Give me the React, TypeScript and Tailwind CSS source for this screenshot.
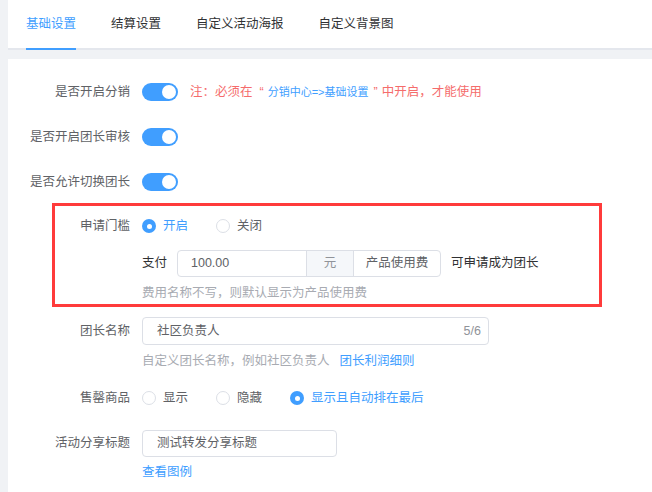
import React, { useState } from 'react';

const font = { fontFamily: '"Liberation Sans", "Noto Sans CJK SC", sans-serif' };

const tabs = ['基础设置', '结算设置', '自定义活动海报', '自定义背景图'];

const Switch = ({ on }: { on: boolean }) => (
  <div className={`flex h-[18px] w-9 items-center rounded-full px-[2px] ${on ? 'justify-end bg-[#409eff]' : 'justify-start bg-[#dcdfe6]'}`}>
    <div className="h-[14px] w-[14px] rounded-full bg-white" />
  </div>
);

const Radio = ({ checked, label }: { checked: boolean; label: string }) => (
  <div className="flex items-center gap-[7px]">
    {checked ? (
      <div className="flex h-[14px] w-[14px] items-center justify-center rounded-full bg-[#409eff]">
        <div className="h-[5px] w-[5px] rounded-full bg-white" />
      </div>
    ) : (
      <div className="h-[14px] w-[14px] rounded-full border border-[#dcdfe6] bg-white" />
    )}
    <span className={checked ? 'text-[#409eff]' : 'text-[#606266]'}>{label}</span>
  </div>
);

const Label = ({ children }: { children: React.ReactNode }) => (
  <div className="w-[134px] shrink-0 pr-3 text-right text-[#606266]">{children}</div>
);

export default function App() {
  const [active] = useState(0);

  return (
    <div className="min-h-[492px] bg-[#f0f2f5] pl-2 text-[12.5px]" style={font}>
      {/* Tabs */}
      <div className="flex h-[50px] border-b-2 border-[#e4e7ed] bg-white pl-[18px]">
        {tabs.map((t, i) => (
          <div
            key={t}
            className={`-mb-[2px] mr-[35px] flex items-center border-b-2 ${i === active ? 'border-[#409eff] text-[#409eff]' : 'border-transparent text-[#303133]'}`}
          >
            {t}
          </div>
        ))}
      </div>

      {/* Form */}
      <div className="mt-[9px] min-h-[433px] bg-white pt-[23px]">
        <div className="flex h-5 items-center">
          <Label>是否开启分销</Label>
          <Switch on />
          <span className="ml-3 flex items-center text-[#f56c6c]">
            注：必须在
            <span className="ml-[7px] mr-[4px]">“</span>
            <span className="text-[11px] text-[#409eff]">分销中心=&gt;基础设置</span>
            <span className="ml-[5px] mr-[4px]">”</span>
            中开启，才能使用
          </span>
        </div>
        <div className="mt-[25px] flex h-5 items-center">
          <Label>是否开启团长审核</Label>
          <Switch on />
        </div>
        <div className="mt-[25px] flex h-5 items-center">
          <Label>是否允许切换团长</Label>
          <Switch on />
        </div>

        {/* Highlighted block */}
        <div className="ml-[44px] mt-[11px] w-[550px] border-[3px] border-[#ff3b3b] pb-[3px] pt-[10px]">
          <div className="flex h-5 items-center">
            <div className="w-[87px] shrink-0 pr-3 text-right text-[#606266]">申请门槛</div>
            <div className="flex items-center gap-[28px]">
              <Radio checked label="开启" />
              <Radio checked={false} label="关闭" />
            </div>
          </div>
          <div className="ml-[87px] mt-[14px] flex items-center">
            <span className="text-[#303133]">支付</span>
            <div className="ml-[10px] flex h-[27px] rounded border border-[#dcdfe6]">
              <div className="flex w-[128px] items-center pl-[13px] text-[#606266]">100.00</div>
              <div className="flex w-[47px] items-center justify-center border-l border-[#dcdfe6] bg-[#f5f7fa] text-[#909399]">元</div>
              <div className="flex w-[87px] items-center justify-center border-l border-[#dcdfe6] text-[#606266]">产品使用费</div>
            </div>
            <span className="ml-[10px] text-[#303133]">可申请成为团长</span>
          </div>
          <div className="ml-[87px] mt-2 leading-4 text-[#a8abb2]">费用名称不写，则默认显示为产品使用费</div>
        </div>

        <div className="mt-[10px] flex items-center">
          <Label>团长名称</Label>
          <div className="flex h-[28px] w-[347px] items-center justify-between rounded border border-[#dcdfe6] pl-[14px] pr-[7px]">
            <span className="text-[#606266]">社区负责人</span>
            <span className="text-[#909399]">5/6</span>
          </div>
        </div>
        <div className="ml-[134px] mt-2 flex gap-[10px] leading-4">
          <span className="text-[#a8abb2]">自定义团长名称，例如社区负责人</span>
          <span className="text-[#409eff]">团长利润细则</span>
        </div>

        <div className="mt-[19px] flex h-5 items-center">
          <Label>售罄商品</Label>
          <div className="flex items-center gap-[28px]">
            <Radio checked={false} label="显示" />
            <Radio checked={false} label="隐藏" />
            <Radio checked label="显示且自动排在最后" />
          </div>
        </div>

        <div className="mt-[22px] flex items-center">
          <Label>活动分享标题</Label>
          <div className="flex h-[27px] w-[195px] items-center rounded border border-[#dcdfe6] pl-[14px] text-[#606266]">
            测试转发分享标题
          </div>
        </div>
        <div className="ml-[134px] mt-[7px] leading-4 text-[#409eff]">查看图例</div>
      </div>
    </div>
  );
}
